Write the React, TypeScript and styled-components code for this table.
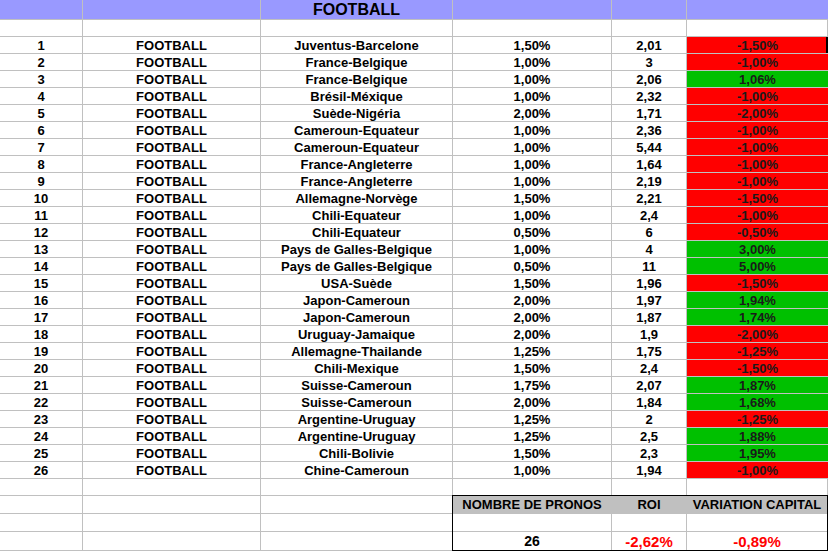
import React from "react";
import styled, { createGlobalStyle } from "styled-components";

const Global = createGlobalStyle`
  html, body { margin: 0; padding: 0; background: #fff; }
  body { font-family: "Liberation Sans", Arial, sans-serif; }
`;

type Row = [string, string, string, string, boolean];

const rows: Row[] = [
  ["Juventus-Barcelone", "1,50%", "2,01", "-1,50%", false],
  ["France-Belgique", "1,00%", "3", "-1,00%", false],
  ["France-Belgique", "1,00%", "2,06", "1,06%", true],
  ["Brésil-Méxique", "1,00%", "2,32", "-1,00%", false],
  ["Suède-Nigéria", "2,00%", "1,71", "-2,00%", false],
  ["Cameroun-Equateur", "1,00%", "2,36", "-1,00%", false],
  ["Cameroun-Equateur", "1,00%", "5,44", "-1,00%", false],
  ["France-Angleterre", "1,00%", "1,64", "-1,00%", false],
  ["France-Angleterre", "1,00%", "2,19", "-1,00%", false],
  ["Allemagne-Norvège", "1,50%", "2,21", "-1,50%", false],
  ["Chili-Equateur", "1,00%", "2,4", "-1,00%", false],
  ["Chili-Equateur", "0,50%", "6", "-0,50%", false],
  ["Pays de Galles-Belgique", "1,00%", "4", "3,00%", true],
  ["Pays de Galles-Belgique", "0,50%", "11", "5,00%", true],
  ["USA-Suède", "1,50%", "1,96", "-1,50%", false],
  ["Japon-Cameroun", "2,00%", "1,97", "1,94%", true],
  ["Japon-Cameroun", "2,00%", "1,87", "1,74%", true],
  ["Uruguay-Jamaique", "2,00%", "1,9", "-2,00%", false],
  ["Allemagne-Thailande", "1,25%", "1,75", "-1,25%", false],
  ["Chili-Mexique", "1,50%", "2,4", "-1,50%", false],
  ["Suisse-Cameroun", "1,75%", "2,07", "1,87%", true],
  ["Suisse-Cameroun", "2,00%", "1,84", "1,68%", true],
  ["Argentine-Uruguay", "1,25%", "2", "-1,25%", false],
  ["Argentine-Uruguay", "1,25%", "2,5", "1,88%", true],
  ["Chili-Bolivie", "1,50%", "2,3", "1,95%", true],
  ["Chine-Cameroun", "1,00%", "1,94", "-1,00%", false],
];

const Sheet = styled.div`
  display: grid;
  grid-template-columns: 82px 177px 191px 158px 74px 141px;
  grid-template-rows: 19px 16px repeat(26, 16px) 16px 17px 17px 18px;
  gap: 1px;
  padding-bottom: 1px;
  width: 828px;
  background: #c0c0c0;
`;

const Cell = styled.div<{
  $bg?: string;
  $weight?: number;
  $color?: string;
  $size?: number;
  $edge?: "grid" | "mark";
}>`
  display: flex;
  align-items: center;
  justify-content: center;
  background: ${(p) => p.$bg || "#fff"};
  color: ${(p) => p.$color || "#000"};
  font-size: ${(p) => p.$size || 13}px;
  font-weight: ${(p) => p.$weight ?? 700};
  line-height: 1;
  white-space: nowrap;
  overflow: hidden;
  box-shadow: ${(p) =>
    p.$edge === "mark"
      ? "inset -2px 0 0 #000"
      : p.$edge === "grid"
      ? "inset -1px 0 0 #c0c0c0"
      : "none"};
`;

const HeadCell = styled(Cell)`
  background: #9999ff;
`;

const SummaryBox = styled.div`
  grid-column: 4 / 7;
  grid-row: 30 / 33;
  display: grid;
  grid-template-columns: 158px 74px 1fr;
  grid-template-rows: 17px 17px 18px;
  gap: 1px;
  background: #c0c0c0;
  outline: 1px solid #000;
  border-right: 1px solid #000;
`;

const SumHead = styled(Cell)`
  background: #c0c0c0;
`;

export default function App() {
  const blank = (key: string) => (
    <React.Fragment key={key}>
      <Cell />
      <Cell />
      <Cell />
      <Cell />
      <Cell />
      <Cell $edge="grid" />
    </React.Fragment>
  );
  const leftBlank = (key: string) => (
    <React.Fragment key={key}>
      <Cell />
      <Cell />
      <Cell />
    </React.Fragment>
  );
  return (
    <>
      <Global />
      <Sheet>
        <HeadCell />
        <HeadCell />
        <HeadCell $size={16}>FOOTBALL</HeadCell>
        <HeadCell />
        <HeadCell />
        <HeadCell />
        {blank("b0")}
        {rows.map((r, i) => (
          <React.Fragment key={i}>
            <Cell>{i + 1}</Cell>
            <Cell>FOOTBALL</Cell>
            <Cell>{r[0]}</Cell>
            <Cell>{r[1]}</Cell>
            <Cell>{r[2]}</Cell>
            <Cell
              $bg={r[4] ? "#00c000" : "#ff0000"}
              $color="#1a1a1a"
              $edge={i === 0 ? "mark" : undefined}
            >
              {r[3]}
            </Cell>
          </React.Fragment>
        ))}
        {blank("b1")}
        {leftBlank("l1")}
        {leftBlank("l2")}
        {leftBlank("l3")}
        <SummaryBox>
          <SumHead>NOMBRE DE PRONOS</SumHead>
          <SumHead>ROI</SumHead>
          <SumHead>VARIATION CAPITAL</SumHead>
          <Cell />
          <Cell />
          <Cell />
          <Cell $size={14}>26</Cell>
          <Cell $color="#ff0000" $size={15}>-2,62%</Cell>
          <Cell $color="#ff0000" $size={15}>-0,89%</Cell>
        </SummaryBox>
      </Sheet>
    </>
  );
}
